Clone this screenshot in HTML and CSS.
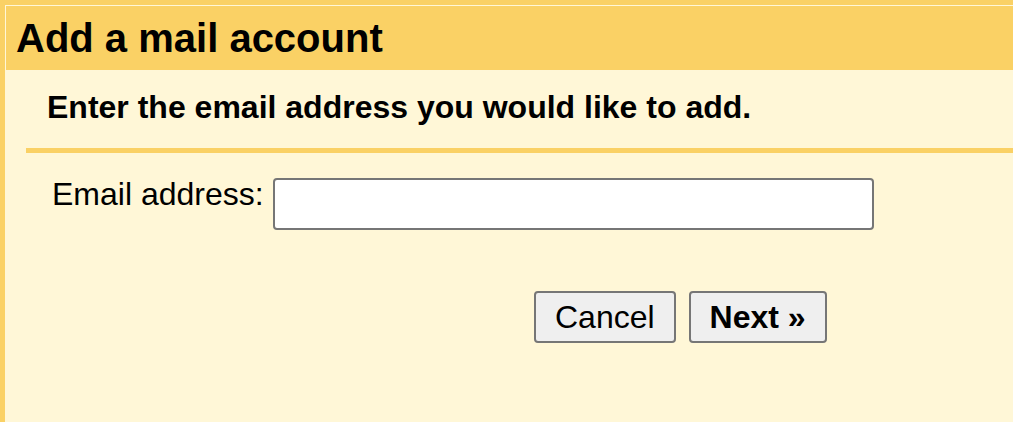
FILE: index.html
```html
<!DOCTYPE html>
<html lang="en">
<head>
<meta charset="utf-8">
<title>Add a mail account</title>
<link rel="stylesheet" href="styles.css">
</head>
<body>
<div class="frame">
  <div class="header">Add a mail account</div>
  <div class="content">
    <div class="subhead">Enter the email address you would like to add.</div>
    <div class="form-row">
      <label class="label" for="email">Email address:</label>
      <input class="input" id="email" type="text">
    </div>
    <div class="actions">
      <button class="btn" type="button">Cancel</button>
      <button class="btn btn-primary" type="button">Next &raquo;</button>
    </div>
  </div>
</div>
</body>
</html>
```
FILE: styles.css
```css
html, body {
  margin: 0;
  padding: 0;
  height: 100%;
}
body {
  background: #fff7d7;
  font-family: "Liberation Sans", Arial, sans-serif;
  color: #000;
}
.frame {
  box-sizing: border-box;
  min-height: 100vh;
  border-top: 5px solid #fad165;
  border-left: 5px solid #fad165;
  padding: 1px 0 0 1px;
}
.header {
  background: #fad165;
  height: 64px;
  line-height: 64px;
  font-size: 40px;
  font-weight: bold;
  padding-left: 10px;
  white-space: nowrap;
}
.content {
  margin-left: 20px;
}
.subhead {
  font-size: 32px;
  font-weight: bold;
  line-height: 37px;
  padding: 19px 0 22px 21px;
  border-bottom: 5px solid #fad165;
  white-space: nowrap;
}
.form-row {
  display: flex;
  align-items: flex-start;
  gap: 9px;
  padding: 23px 0 0 26px;
}
.label {
  font-size: 32px;
  line-height: 37px;
  white-space: nowrap;
}
.input {
  box-sizing: border-box;
  margin: 2px 0 0 0;
  width: 601px;
  height: 52px;
  border: 2px solid #767676;
  border-radius: 4px;
  background: #fff;
  font-size: 32px;
  font-family: inherit;
  padding: 0 8px;
}
.actions {
  display: flex;
  gap: 13px;
  margin: 61px 0 0 508px;
}
.btn {
  box-sizing: border-box;
  height: 52px;
  padding: 6px 19px 5px;
  border: 2px solid #767676;
  border-radius: 4px;
  background: #efefef;
  font-family: inherit;
  font-size: 32px;
  line-height: 37px;
  color: #000;
}
.btn-primary {
  font-weight: bold;
}
```
